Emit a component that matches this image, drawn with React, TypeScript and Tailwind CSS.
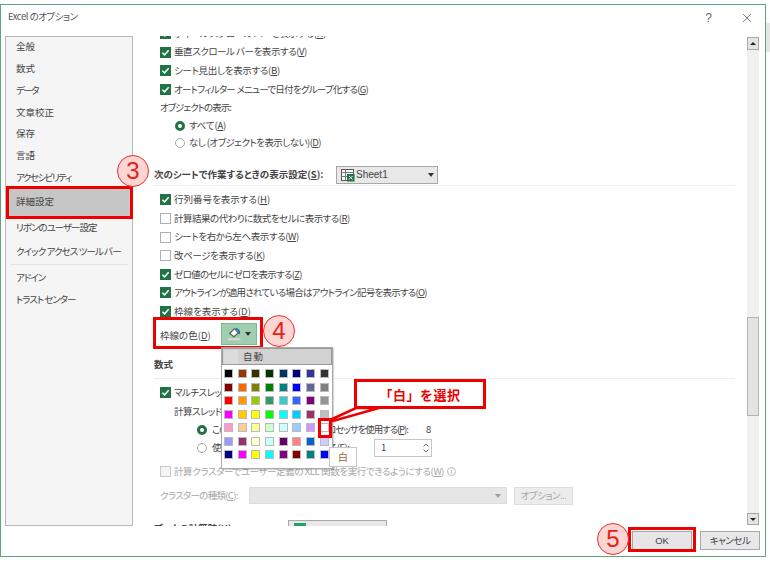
const rows = [
  ["#000000", "#993300", "#333300", "#003300", "#003366", "#000080", "#333399", "#333333"],
  ["#800000", "#ff6600", "#808000", "#008000", "#008080", "#0000ff", "#666699", "#808080"],
  ["#ff0000", "#ff9900", "#99cc00", "#339966", "#33cccc", "#3366ff", "#800080", "#969696"],
  ["#ff00ff", "#ffcc00", "#ffff00", "#00ff00", "#00ffff", "#00ccff", "#993366", "#c0c0c0"],
  ["#ff99cc", "#ffcc99", "#ffff99", "#ccffcc", "#ccffff", "#99ccff", "#cc99ff", "#ffffff"],
  ["#9999ff", "#993366", "#ffffcc", "#ccffff", "#660066", "#ff8080", "#0066cc", "#ccccff"],
  ["#000080", "#ff00ff", "#ffff00", "#00ffff", "#800080", "#800000", "#008080", "#0000ff"],
];

const font = { fontFamily: '"Noto Sans CJK JP", "Noto Sans", sans-serif' };
const latin = { fontFamily: '"Liberation Sans", sans-serif' };

function Check({ on, dim }: { on?: boolean; dim?: boolean }) {
  return (
    <span className={`flex h-[11px] w-[11px] shrink-0 items-center justify-center border ${on ? "border-[#217346] bg-[#217346]" : dim ? "border-[#c8c8c8] bg-[#f4f4f4]" : "border-[#b0b0b0] bg-white"}`}>
      {on && (
        <svg viewBox="0 0 10 10" className="h-[9px] w-[9px]" fill="none" stroke="#fff" strokeWidth="1.6">
          <path d="M1.5 5.2 4 7.6 8.5 2.5" />
        </svg>
      )}
    </span>
  );
}

function CheckRow({ on, t = "", children }: { on?: boolean; t?: string; children: React.ReactNode }) {
  return (
    <div className="flex h-[18.6px] items-center gap-[3px] whitespace-nowrap">
      <Check on={on} />
      <span className={t}>{children}</span>
    </div>
  );
}

function Radio({ on }: { on?: boolean }) {
  return <span className={`block h-[10px] w-[10px] shrink-0 rounded-full bg-white ${on ? "border-[3px] border-[#217346]" : "border border-[#a8a8a8]"}`} />;
}

function Caret({ className = "" }: { className?: string }) {
  return <span className={`block h-0 w-0 border-x-[3.5px] border-t-[4px] border-x-transparent border-t-[#333] ${className}`} />;
}

function Circled({ n, className }: { n: string; className: string }) {
  return (
    <div className={`absolute flex h-[32px] w-[32px] items-center justify-center rounded-full border border-[#e8302a] bg-[#fdd5d2] text-[24px] leading-none text-[#e8201a] ${className}`} style={latin}>
      {n}
    </div>
  );
}

function U({ children }: { children: React.ReactNode }) {
  return <span className="underline underline-offset-1">{children}</span>;
}

function SheetIcon() {
  return (
    <svg viewBox="0 0 14 14" className="h-[14px] w-[14px] shrink-0">
      <rect x="0.5" y="1.5" width="12" height="11" fill="#fff" stroke="#555" />
      <path d="M0.5 4.5h12M4.5 1.5v11M0.5 8.5h12" stroke="#777" fill="none" />
      <rect x="6" y="6" width="7.5" height="7.5" fill="#217346" />
      <path d="M8 8l3.5 3.5M11.5 8 8 11.5" stroke="#fff" fill="none" />
    </svg>
  );
}

const side = [
  ["全般", ""],
  ["数式", ""],
  ["データ", "tracking-[-1.5px]"],
  ["文章校正", ""],
  ["保存", ""],
  ["言語", ""],
  ["アクセシビリティ", "tracking-[-1.5px]"],
];

export default function App() {
  return (
    <div className="relative h-[562px] w-[770px] overflow-hidden bg-white text-[9.5px] leading-none text-[#444] [font-feature-settings:'palt']" style={font}>
      <div className="absolute left-[766px] top-[23px] h-[29px] w-[4px] bg-[#e6e6e6]" />
      <div className="mt-[4px] flex h-[553px] w-[766px] flex-col border border-[#5aa77c] bg-white">
        <div className="flex h-[31px] shrink-0 items-start justify-between pl-[7px] pr-[13px] pt-[7px]">
          <span className="tracking-[-0.5px] text-[#555]">Excel のオプション</span>
          <div className="flex items-center gap-[30px] text-[#666]">
            <span className="text-[12px]" style={latin}>?</span>
            <svg viewBox="0 0 11 11" className="h-[10px] w-[10px]" fill="none" stroke="#666" strokeWidth="0.9">
              <path d="M1 1l9 9M10 1l-9 9" />
            </svg>
          </div>
        </div>

        <div className="flex min-h-0 flex-1">
          {/* sidebar */}
          <div className="ml-[4px] h-[490px] w-[128px] shrink-0 border border-[#b8b8b8] bg-[#f5f5f5]">
            <div className="-mt-[1px]">
              {side.map(([t, c]) => (
                <div key={t} className={`flex h-[21.8px] items-center pl-[10px] ${c}`}>{t}</div>
              ))}
            </div>
            <div className="mx-[2px] flex h-[27px] items-center bg-[#c6c6c6] pl-[8px]">詳細設定</div>
            <div className="flex h-[24px] items-center whitespace-nowrap pl-[10px] tracking-[-1px]">リボンのユーザー設定</div>
            <div className="flex h-[24px] items-center whitespace-nowrap pl-[10px] tracking-[-0.9px]">クイック アクセス ツール バー</div>
            <div className="mx-[4px] h-px bg-[#e2e2e2]" />
            <div className="mt-[2px] flex h-[22px] items-center pl-[10px] tracking-[-1px]">アドイン</div>
            <div className="flex h-[22px] items-center pl-[10px] tracking-[-1px]">トラスト センター</div>
          </div>

          {/* content */}
          <div className="relative ml-[17px] h-[490px] w-[610px] shrink-0 overflow-hidden">
            <div className="-mt-[11.8px] pl-[10px]">
              <CheckRow on t="tracking-[-0.45px]">ホイール スクロール バーを表示する(<U>H</U>)</CheckRow>
              <CheckRow on t="tracking-[-0.45px]">垂直スクロール バーを表示する(<U>V</U>)</CheckRow>
              <CheckRow on t="tracking-[-0.3px]">シート見出しを表示する(<U>B</U>)</CheckRow>
              <CheckRow on t="tracking-[-0.75px]">オートフィルター メニューで日付をグループ化する(<U>G</U>)</CheckRow>
              <div className="flex h-[18.6px] items-center tracking-[-1px]">オブジェクトの表示:</div>
              <div className="flex h-[17px] items-center gap-[4px] pl-[15px]"><Radio on /><span className="tracking-[-0.2px]">すべて(<U>A</U>)</span></div>
              <div className="flex h-[18px] items-center gap-[4px] pl-[15px]"><Radio /><span className="tracking-[-0.55px]">なし (オブジェクトを表示しない)(<U>D</U>)</span></div>
            </div>

            <div className="ml-[4px] mt-[13.8px] flex h-[20px] w-[581px] items-center border-b border-[#eeeeee] pb-[1px]">
              <span className="w-[182px] whitespace-nowrap font-semibold">次のシートで作業するときの表示設定(<U>S</U>):</span>
              <div className="flex h-[18px] w-[102px] items-center border border-[#a8a8a8] bg-[#e8e8e8] pl-[4px] pr-[3px]">
                <SheetIcon />
                <span className="ml-[1px] flex-1 text-[10px]" style={latin}>Sheet1</span>
                <Caret />
              </div>
            </div>

            <div className="mt-[4.7px] pl-[10px]">
              <CheckRow on>行列番号を表示する(<U>H</U>)</CheckRow>
              <CheckRow t="tracking-[-0.5px]">計算結果の代わりに数式をセルに表示する(<U>R</U>)</CheckRow>
              <CheckRow t="tracking-[-0.4px]">シートを右から左へ表示する(<U>W</U>)</CheckRow>
              <CheckRow t="tracking-[-0.35px]">改ページを表示する(<U>K</U>)</CheckRow>
              <CheckRow on t="tracking-[-0.7px]">ゼロ値のセルにゼロを表示する(<U>Z</U>)</CheckRow>
              <CheckRow on t="tracking-[-0.75px]">アウトラインが適用されている場合はアウトライン記号を表示する(<U>O</U>)</CheckRow>
              <CheckRow on>枠線を表示する(<U>D</U>)</CheckRow>
              <div className="mt-[2px] flex h-[22px] items-center">
                <span className="pt-[4px]">枠線の色(<U>D</U>)</span>
                <div className="ml-[10px] flex h-[22px] w-[36px] items-center justify-center gap-[3px] border border-[#7fb795] bg-[#9fcfae]">
                  <svg viewBox="0 0 14 14" className="h-[15px] w-[15px]">
                    <path d="M2.5 7 7 2.5l3.5 4L6.5 10z" fill="#fff" stroke="#555" />
                    <path d="M8 2.5c2.5.5 3.8 2.6 3.5 5" fill="none" stroke="#1f6fb2" strokeWidth="1.5" />
                    <rect x="1" y="11.5" width="11.5" height="1.8" fill="#d9d9d9" />
                  </svg>
                  <Caret />
                </div>
              </div>
            </div>

            <div className="ml-[4px] mt-[7px] flex h-[27px] w-[581px] items-start border-b border-[#eeeeee] pt-[8px] font-semibold">数式</div>

            <div className="mt-[4.7px] pl-[10px]">
              <CheckRow on t="tracking-[-0.5px]">マルチスレッド計算を行う(<U>U</U>)</CheckRow>
              <div className="flex h-[18.6px] items-center pl-[14px] tracking-[-0.5px]">計算スレッド数</div>
              <div className="flex h-[18px] items-center gap-[5px] pl-[37px]">
                <Radio on />
                <span className="w-[201px] whitespace-nowrap tracking-[-1.1px]">このコンピューターのすべてのプロセッサを使用する(<U>P</U>):</span>
                <span className="ml-[8px]">8</span>
              </div>
              <div className="flex h-[18px] items-center gap-[5px] pl-[37px]">
                <Radio />
                <span className="w-[151px] whitespace-nowrap tracking-[-0.6px]">使用するプロセッサ数を指定する(<U>E</U>):</span>
                <div className="ml-[6px] flex h-[18px] w-[58px] items-center justify-between border border-[#c6c6c6] pl-[6px] pr-[2px]">
                  <span>1</span>
                  <div className="flex flex-col items-center gap-[2px]">
                    <svg viewBox="0 0 6 4" className="h-[4px] w-[6px]" fill="none" stroke="#666"><path d="M0.5 3.5 3 1l2.5 2.5" /></svg>
                    <svg viewBox="0 0 6 4" className="h-[4px] w-[6px]" fill="none" stroke="#666"><path d="M0.5 0.5 3 3l2.5-2.5" /></svg>
                  </div>
                </div>
              </div>
              <div className="mt-[5.8px] flex h-[18.6px] items-center gap-[3px] text-[#a6a6a6]">
                <Check dim />
                <span className="w-[270px] whitespace-nowrap tracking-[-0.4px]">計算クラスターでユーザー定義の XLL 関数を実行できるようにする(<U>W</U>)</span>
                <span className="flex h-[9px] w-[9px] items-center justify-center rounded-full border border-[#bbb] text-[7px]">i</span>
              </div>
              <div className="mt-[5.7px] flex h-[18px] items-center text-[#a6a6a6]">
                <span className="w-[89px] whitespace-nowrap tracking-[-0.7px]">クラスターの種類(<U>C</U>):</span>
                <div className="flex h-[17px] w-[258px] items-center justify-end border border-[#ddd] bg-[#e6e6e6] pr-[5px]"><Caret className="opacity-40" /></div>
                <div className="ml-[7px] flex h-[18px] w-[59px] items-center justify-center whitespace-nowrap border border-[#ddd] bg-[#ececec] tracking-[-0.5px]">オプション...</div>
              </div>
              <div className="-ml-[6px] mt-[15px] flex items-start">
                <span className="w-[134px] whitespace-nowrap pt-[4px] font-semibold">ブックの計算時(<U>H</U>):</span>
                <div className="h-[18px] w-[99px] border border-[#a8a8a8] bg-[#e8e8e8] pl-[5px] pt-[2px]"><span className="block h-[12px] w-[12px] bg-[#1fa463]" /></div>
              </div>
            </div>

            {/* scrollbar */}
            <div className="absolute right-[1px] top-[1px] flex h-[488px] w-[12px] flex-col bg-[#f0f0f0]">
              <div className="flex h-[13px] shrink-0 items-center justify-center border border-[#a8a8a8] bg-[#e4e4e4]"><span className="h-0 w-0 border-x-[3px] border-b-[3.5px] border-x-transparent border-b-[#222]" /></div>
              <div className="flex-1 pt-[267px]"><div className="h-[99px] border border-[#b4b4b4] bg-[#e4e4e4]" /></div>
              <div className="flex h-[12px] shrink-0 items-center justify-center border border-[#a8a8a8] bg-[#e4e4e4]"><span className="h-0 w-0 border-x-[3px] border-t-[3.5px] border-x-transparent border-t-[#222]" /></div>
            </div>
          </div>
        </div>

        <div className="mb-[6px] mr-[5px] flex shrink-0 justify-end gap-[8px]">
          <div className="flex h-[19px] w-[60px] items-center justify-center border border-[#a8a8a8] bg-[#e6e6e6]" style={latin}>OK</div>
          <div className="flex h-[19px] w-[60px] items-center justify-center border border-[#a8a8a8] bg-[#e8e8e8] tracking-[-0.5px]">キャンセル</div>
        </div>
      </div>

      {/* annotations */}
      <div className="absolute left-[6px] top-[186px] h-[33px] w-[127px] border-[3px] border-[#ee0000]" />
      <Circled n="3" className="left-[117px] top-[155px]" />
      <div className="absolute left-[153px] top-[317px] h-[32px] w-[110px] border-[3px] border-[#ee0000]" />
      <Circled n="4" className="left-[263px] top-[315px]" />

      {/* colour picker */}
      <div className="absolute left-[221px] top-[347px] h-[122px] w-[112px] border border-[#a8a8a8] bg-white shadow-[1px_1px_1px_rgba(0,0,0,.15)]">
        <div className="flex h-[17px] items-center gap-[5px] border border-[#999] bg-[#d2d2d2] px-[1px]">
          <span className="h-[14px] w-[14px] bg-[#dcdcdc]" />
          <span className="tracking-[1px]">自動</span>
        </div>
        <div className="flex flex-col gap-[4.5px] pl-[2px] pt-[4px]">
          {rows.map((r, i) => (
            <div key={i} className="flex gap-[4.7px]">
              {r.map((c, j) => (
                <span key={j} className="h-[9px] w-[9px] border-[0.5px] border-[#bbb]" style={{ background: c }} />
              ))}
            </div>
          ))}
        </div>
      </div>
      <div className="absolute left-[318px] top-[418px] h-[20px] w-[14px] border-[3px] border-[#ee0000]" />

      <div className="absolute left-[329px] top-[447px] flex h-[20px] w-[28px] items-center justify-center border border-[#c6c6c6] bg-white text-[10px] text-[#996633]">白</div>

      {/* callout */}
      <svg className="absolute left-[325px] top-[400px] h-[24px] w-[60px]" viewBox="0 0 60 24">
        <path d="M5 20 L31 8 L54 8 L8 21Z" fill="#fff" stroke="#ee0000" strokeWidth="2.5" />
      </svg>
      <div className="absolute left-[354px] top-[379px] flex h-[30px] w-[132px] items-center justify-center border-[3px] border-[#ee0000] bg-white text-[13px] font-semibold tracking-[0.5px] text-[#ee0000] [font-feature-settings:normal]">「白」を選択</div>

      <div className="absolute left-[628px] top-[527px] h-[25px] w-[68px] border-[3px] border-[#ee0000]" />
      <Circled n="5" className="left-[597px] top-[523px]" />
    </div>
  );
}
